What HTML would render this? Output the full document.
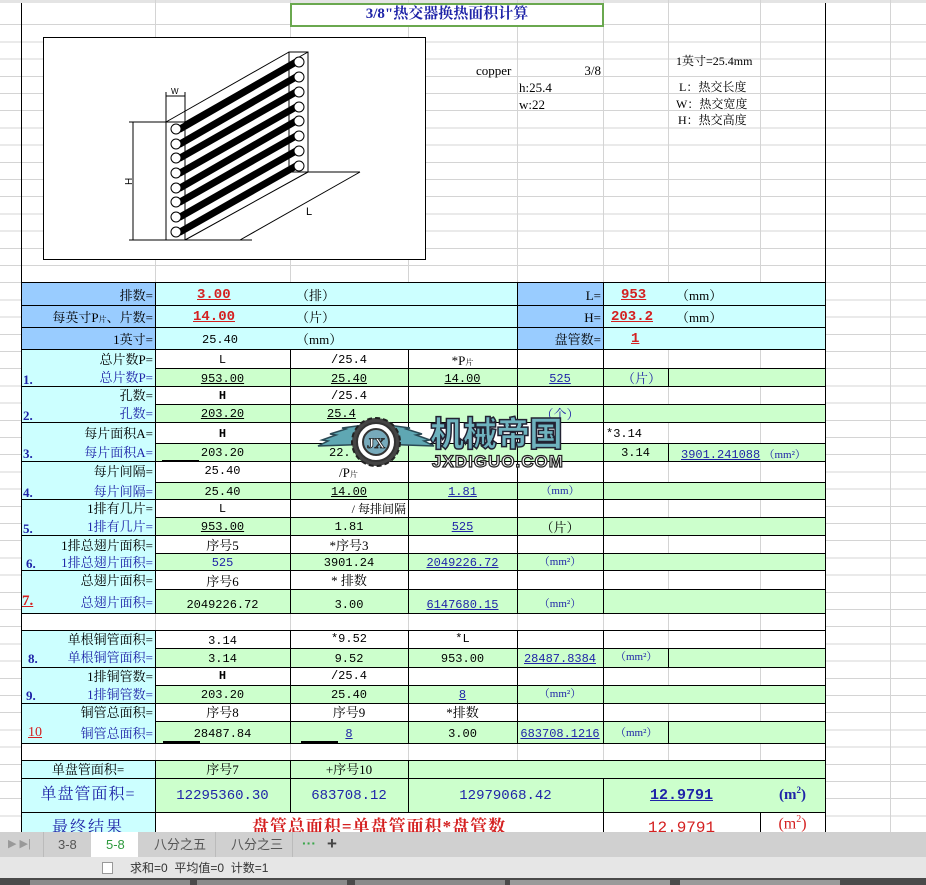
<!DOCTYPE html>
<html><head><meta charset="utf-8"><style>
*{margin:0;padding:0;box-sizing:border-box}
body{width:926px;height:885px;overflow:hidden;background:#fff;position:relative;font-family:"Liberation Serif","Noto Serif CJK SC",serif;font-size:13px;color:#000}
.g{position:absolute;background:#d4d4d4}
.c{position:absolute;border:1px solid #000}
.cy{background:#ccffff}.bl{background:#99ccff}.gr{background:#ccffcc}.wh{background:#fff}
.t{position:absolute;white-space:nowrap;line-height:1;font-family:"Liberation Serif","Noto Serif CJK SC",serif}
.r{text-align:right}.m{text-align:center}
.b{color:#1f24a8}.rd{color:#d42020}.u{text-decoration:underline}
.k{font-family:"Liberation Mono","Noto Sans CJK SC",monospace;font-size:12px}
</style></head><body>
<div style="position:absolute;left:0;top:0;width:926px;height:832px;background:repeating-linear-gradient(to bottom,transparent 0,transparent 16.2px,#d4d4d4 16.2px,#d4d4d4 17.2px);background-position:0 8px"></div>
<div class="g" style="left:0;top:0;width:926px;height:3px;background:#e4e4e4"></div>
<div class="g" style="left:155px;top:0;width:1px;height:282px"></div>
<div class="g" style="left:290px;top:0;width:1px;height:282px"></div>
<div class="g" style="left:408px;top:0;width:1px;height:282px"></div>
<div class="g" style="left:517px;top:0;width:1px;height:282px"></div>
<div class="g" style="left:603px;top:0;width:1px;height:282px"></div>
<div class="g" style="left:668px;top:0;width:1px;height:282px"></div>
<div class="g" style="left:760px;top:0;width:1px;height:282px"></div>
<div class="g" style="left:890px;top:0;width:1px;height:832px"></div>

<div style="position:absolute;left:290px;top:3px;width:314px;height:24px;border:2px solid #6aa84f;background:#fff"></div>
<div class="t m b" style="left:290px;top:7px;width:314px;font-weight:bold;font-size:15px">3/8"热交器换热面积计算</div>

<svg style="position:absolute;left:43px;top:37px" width="384" height="224" viewBox="0 0 384 224">
<rect x="0.5" y="0.5" width="382" height="222" fill="#fff" stroke="#000"/>
<g stroke="#000" fill="none" stroke-width="1">
<rect x="123" y="85" width="19" height="118"/>
<line x1="123" y1="85" x2="246" y2="15"/><line x1="142" y1="85" x2="265" y2="15"/>
<rect x="246" y="15" width="19" height="120"/>
<line x1="142" y1="203" x2="265" y2="135"/>
<line x1="142" y1="203" x2="209" y2="203"/>
<line x1="197" y1="203" x2="317" y2="135"/>
<line x1="265" y1="135" x2="317" y2="135"/>
<line x1="90" y1="85" x2="90" y2="203"/>
<line x1="86" y1="85" x2="123" y2="85"/><line x1="86" y1="203" x2="123" y2="203"/>
<line x1="123" y1="55" x2="123" y2="85"/><line x1="142" y1="55" x2="142" y2="85"/>
<line x1="123" y1="59" x2="142" y2="59"/>
</g>
<g stroke="#000" stroke-width="7" stroke-linecap="round">
<line x1="137" y1="92" x2="253" y2="25"/><line x1="137" y1="107" x2="253" y2="40"/>
<line x1="137" y1="121" x2="253" y2="55"/><line x1="137" y1="136" x2="253" y2="70"/>
<line x1="137" y1="151" x2="253" y2="84"/><line x1="137" y1="165" x2="253" y2="99"/>
<line x1="137" y1="180" x2="253" y2="114"/><line x1="137" y1="195" x2="253" y2="129"/>
</g>
<g stroke="#000" fill="#fff">
<circle cx="133" cy="92" r="5"/><circle cx="133" cy="107" r="5"/><circle cx="133" cy="121" r="5"/><circle cx="133" cy="136" r="5"/><circle cx="133" cy="151" r="5"/><circle cx="133" cy="165" r="5"/><circle cx="133" cy="180" r="5"/><circle cx="133" cy="195" r="5"/>
<circle cx="256" cy="25" r="5"/><circle cx="256" cy="40" r="5"/><circle cx="256" cy="55" r="5"/><circle cx="256" cy="70" r="5"/><circle cx="256" cy="84" r="5"/><circle cx="256" cy="99" r="5"/><circle cx="256" cy="114" r="5"/><circle cx="256" cy="129" r="5"/>
</g>
<text x="263" y="178" font-family="Liberation Sans" font-size="11">L</text>
<text x="128" y="57" font-family="Liberation Sans" font-size="8">W</text>
<text x="0" y="0" font-family="Liberation Sans" font-size="10" transform="translate(89,148) rotate(-90)">H</text>
</svg>

<div class="t" style="left:476px;top:64px">copper</div>
<div class="t r" style="left:540px;top:64px;width:61px">3/8</div>
<div class="t" style="left:519px;top:81px">h:25.4</div>
<div class="t" style="left:519px;top:98px">w:22</div>
<div class="t" style="left:676px;top:55px;font-size:12px">1英寸=25.4mm</div>
<div class="t" style="left:679px;top:81px;font-size:12px">L：热交长度</div>
<div class="t" style="left:676px;top:98px;font-size:12px">W：热交宽度</div>
<div class="t" style="left:678px;top:114px;font-size:12px">H：热交高度</div>

<div class="c bl" style="left:21px;top:282px;width:135px;height:24px"></div>
<div class="c bl" style="left:21px;top:305px;width:135px;height:23px"></div>
<div class="c bl" style="left:21px;top:327px;width:135px;height:23px"></div>
<div class="c cy" style="left:155px;top:282px;width:363px;height:24px"></div>
<div class="c cy" style="left:155px;top:305px;width:363px;height:23px"></div>
<div class="c cy" style="left:155px;top:327px;width:363px;height:23px"></div>
<div class="c bl" style="left:517px;top:282px;width:87px;height:24px"></div>
<div class="c bl" style="left:517px;top:305px;width:87px;height:23px"></div>
<div class="c bl" style="left:517px;top:327px;width:87px;height:23px"></div>
<div class="c cy" style="left:603px;top:282px;width:223px;height:24px"></div>
<div class="c cy" style="left:603px;top:305px;width:223px;height:23px"></div>
<div class="c cy" style="left:603px;top:327px;width:223px;height:23px"></div>

<div class="c cy" style="left:21px;top:349px;width:135px;height:38px"></div>
<div class="c cy" style="left:21px;top:386px;width:135px;height:37px"></div>
<div class="c cy" style="left:21px;top:422px;width:135px;height:40px"></div>
<div class="c cy" style="left:21px;top:461px;width:135px;height:39px"></div>
<div class="c cy" style="left:21px;top:499px;width:135px;height:37px"></div>
<div class="c cy" style="left:21px;top:535px;width:135px;height:36px"></div>
<div class="c cy" style="left:21px;top:570px;width:135px;height:44px"></div>
<div class="c wh" style="left:21px;top:613px;width:805px;height:18px"></div>
<div class="c cy" style="left:21px;top:630px;width:135px;height:38px"></div>
<div class="c cy" style="left:21px;top:667px;width:135px;height:37px"></div>
<div class="c cy" style="left:21px;top:703px;width:135px;height:41px"></div>
<div class="c wh" style="left:21px;top:743px;width:805px;height:18px"></div>

<div class="c wh" style="left:155px;top:349px;width:671px;height:20px"></div>
<div class="c wh" style="left:155px;top:386px;width:671px;height:19px"></div>
<div class="c wh" style="left:155px;top:422px;width:671px;height:22px"></div>
<div class="c wh" style="left:155px;top:461px;width:671px;height:22px"></div>
<div class="c wh" style="left:155px;top:499px;width:671px;height:19px"></div>
<div class="c wh" style="left:155px;top:535px;width:671px;height:19px"></div>
<div class="c wh" style="left:155px;top:570px;width:671px;height:20px"></div>
<div class="c wh" style="left:155px;top:630px;width:671px;height:19px"></div>
<div class="c wh" style="left:155px;top:667px;width:671px;height:19px"></div>
<div class="c wh" style="left:155px;top:703px;width:671px;height:19px"></div>
<div class="c gr" style="left:155px;top:368px;width:671px;height:19px"></div>
<div class="c gr" style="left:155px;top:404px;width:671px;height:19px"></div>
<div class="c gr" style="left:155px;top:443px;width:671px;height:19px"></div>
<div class="c gr" style="left:155px;top:482px;width:671px;height:18px"></div>
<div class="c gr" style="left:155px;top:517px;width:671px;height:19px"></div>
<div class="c gr" style="left:155px;top:553px;width:671px;height:18px"></div>
<div class="c gr" style="left:155px;top:589px;width:671px;height:25px"></div>
<div class="c gr" style="left:155px;top:648px;width:671px;height:20px"></div>
<div class="c gr" style="left:155px;top:685px;width:671px;height:19px"></div>
<div class="c gr" style="left:155px;top:721px;width:671px;height:23px"></div>

<div class="c cy" style="left:21px;top:760px;width:135px;height:19px"></div>
<div class="c gr" style="left:155px;top:760px;width:136px;height:19px"></div>
<div class="c gr" style="left:290px;top:760px;width:119px;height:19px"></div>
<div class="c gr" style="left:408px;top:760px;width:418px;height:19px"></div>
<div class="c cy" style="left:21px;top:778px;width:135px;height:35px"></div>
<div class="c gr" style="left:155px;top:778px;width:136px;height:35px"></div>
<div class="c gr" style="left:290px;top:778px;width:119px;height:35px"></div>
<div class="c gr" style="left:408px;top:778px;width:196px;height:35px"></div>
<div class="c gr" style="left:603px;top:778px;width:223px;height:35px"></div>
<div class="c cy" style="left:21px;top:812px;width:135px;height:30px"></div>
<div class="c wh" style="left:155px;top:812px;width:449px;height:30px"></div>
<div class="c wh" style="left:603px;top:812px;width:158px;height:30px"></div>
<div class="c wh" style="left:760px;top:812px;width:66px;height:30px"></div>

<div style="position:absolute;left:290px;top:349px;width:1px;height:264px;background:#000"></div>
<div style="position:absolute;left:408px;top:349px;width:1px;height:264px;background:#000"></div>
<div style="position:absolute;left:517px;top:349px;width:1px;height:264px;background:#000"></div>
<div style="position:absolute;left:603px;top:349px;width:1px;height:264px;background:#000"></div>
<div style="position:absolute;left:290px;top:630px;width:1px;height:113px;background:#000"></div>
<div style="position:absolute;left:408px;top:630px;width:1px;height:113px;background:#000"></div>
<div style="position:absolute;left:517px;top:630px;width:1px;height:113px;background:#000"></div>
<div style="position:absolute;left:603px;top:630px;width:1px;height:113px;background:#000"></div>
<div style="position:absolute;left:668px;top:368px;width:1px;height:18px;background:#000"></div>
<div style="position:absolute;left:668px;top:443px;width:1px;height:18px;background:#000"></div>
<div style="position:absolute;left:668px;top:648px;width:1px;height:19px;background:#000"></div>
<div style="position:absolute;left:668px;top:721px;width:1px;height:22px;background:#000"></div>
<div class="g" style="left:668px;top:350px;width:1px;height:18px"></div><div class="g" style="left:760px;top:350px;width:1px;height:18px"></div>
<div class="g" style="left:668px;top:387px;width:1px;height:17px"></div><div class="g" style="left:760px;top:387px;width:1px;height:17px"></div>
<div class="g" style="left:668px;top:423px;width:1px;height:20px"></div><div class="g" style="left:760px;top:423px;width:1px;height:20px"></div>
<div class="g" style="left:668px;top:462px;width:1px;height:20px"></div><div class="g" style="left:760px;top:462px;width:1px;height:20px"></div>
<div class="g" style="left:668px;top:500px;width:1px;height:17px"></div><div class="g" style="left:760px;top:500px;width:1px;height:17px"></div>
<div class="g" style="left:668px;top:536px;width:1px;height:17px"></div><div class="g" style="left:760px;top:536px;width:1px;height:17px"></div>
<div class="g" style="left:668px;top:571px;width:1px;height:18px"></div><div class="g" style="left:760px;top:571px;width:1px;height:18px"></div>
<div class="g" style="left:155px;top:614px;width:1px;height:16px"></div><div class="g" style="left:290px;top:614px;width:1px;height:16px"></div><div class="g" style="left:408px;top:614px;width:1px;height:16px"></div><div class="g" style="left:517px;top:614px;width:1px;height:16px"></div><div class="g" style="left:603px;top:614px;width:1px;height:16px"></div><div class="g" style="left:668px;top:614px;width:1px;height:16px"></div><div class="g" style="left:760px;top:614px;width:1px;height:16px"></div>
<div class="g" style="left:668px;top:631px;width:1px;height:17px"></div><div class="g" style="left:760px;top:631px;width:1px;height:17px"></div>
<div class="g" style="left:668px;top:668px;width:1px;height:17px"></div><div class="g" style="left:760px;top:668px;width:1px;height:17px"></div>
<div class="g" style="left:668px;top:704px;width:1px;height:17px"></div><div class="g" style="left:760px;top:704px;width:1px;height:17px"></div>
<div class="g" style="left:155px;top:744px;width:1px;height:16px"></div><div class="g" style="left:290px;top:744px;width:1px;height:16px"></div><div class="g" style="left:408px;top:744px;width:1px;height:16px"></div><div class="g" style="left:517px;top:744px;width:1px;height:16px"></div><div class="g" style="left:603px;top:744px;width:1px;height:16px"></div><div class="g" style="left:668px;top:744px;width:1px;height:16px"></div><div class="g" style="left:760px;top:744px;width:1px;height:16px"></div>

<div style="position:absolute;left:21px;top:3px;width:1px;height:829px;background:#000"></div>
<div style="position:absolute;left:825px;top:3px;width:1px;height:829px;background:#000"></div>

<div class="t r" style="left:21px;top:289px;width:132px">排数=</div>
<div class="t r" style="left:21px;top:311px;width:132px">每英寸P<span style="font-size:8px">片</span>、片数=</div>
<div class="t r" style="left:21px;top:333px;width:132px">1英寸=</div>
<div class="t rd u k" style="left:197px;top:288px;font-size:14px;font-weight:bold">3.00 </div>
<div class="t rd u k" style="left:193px;top:310px;font-size:14px;font-weight:bold">14.00 </div>
<div class="t k" style="left:202px;top:334px">25.40</div>
<div class="t" style="left:296px;top:289px">（排）</div>
<div class="t" style="left:296px;top:311px">（片）</div>
<div class="t" style="left:296px;top:333px">（mm）</div>
<div class="t r" style="left:517px;top:289px;width:84px">L=</div>
<div class="t r" style="left:517px;top:311px;width:84px">H=</div>
<div class="t r" style="left:517px;top:333px;width:84px">盘管数=</div>
<div class="t rd u k" style="left:621px;top:288px;font-size:14px;font-weight:bold">953</div>
<div class="t rd u k" style="left:611px;top:310px;font-size:14px;font-weight:bold">203.2</div>
<div class="t rd u k" style="left:631px;top:332px;font-size:14px;font-weight:bold">1</div>
<div class="t" style="left:676px;top:289px">（mm）</div>
<div class="t" style="left:676px;top:311px">（mm）</div>

<div class="t r" style="left:21px;top:353px;width:132px">总片数P=</div>
<div class="t r b" style="left:21px;top:371px;width:132px">总片数P=</div>
<div class="t b" style="left:23px;top:373px;font-weight:bold">1.</div>
<div class="t r" style="left:21px;top:389px;width:132px">孔数=</div>
<div class="t r b" style="left:21px;top:407px;width:132px">孔数=</div>
<div class="t b" style="left:23px;top:409px;font-weight:bold">2.</div>
<div class="t r" style="left:21px;top:427px;width:132px">每片面积A=</div>
<div class="t r b" style="left:21px;top:446px;width:132px">每片面积A=</div>
<div class="t b" style="left:23px;top:447px;font-weight:bold">3.</div>
<div class="t r" style="left:21px;top:465px;width:132px">每片间隔=</div>
<div class="t r b" style="left:21px;top:485px;width:132px">每片间隔=</div>
<div class="t b" style="left:23px;top:486px;font-weight:bold">4.</div>
<div class="t r" style="left:21px;top:502px;width:132px">1排有几片=</div>
<div class="t r b" style="left:21px;top:520px;width:132px">1排有几片=</div>
<div class="t b" style="left:23px;top:522px;font-weight:bold">5.</div>
<div class="t r" style="left:21px;top:539px;width:132px">1排总翅片面积=</div>
<div class="t r b" style="left:21px;top:556px;width:132px">1排总翅片面积=</div>
<div class="t b" style="left:26px;top:557px;font-weight:bold">6.</div>
<div class="t r" style="left:21px;top:574px;width:132px">总翅片面积=</div>
<div class="t r b" style="left:21px;top:596px;width:132px">总翅片面积=</div>
<div class="t rd u" style="left:22px;top:594px;font-weight:bold;font-size:15px">7.</div>
<div class="t r" style="left:21px;top:633px;width:132px">单根铜管面积=</div>
<div class="t r b" style="left:21px;top:651px;width:132px">单根铜管面积=</div>
<div class="t b" style="left:28px;top:652px;font-weight:bold">8.</div>
<div class="t r" style="left:21px;top:670px;width:132px">1排铜管数=</div>
<div class="t r b" style="left:21px;top:688px;width:132px">1排铜管数=</div>
<div class="t b" style="left:26px;top:689px;font-weight:bold">9.</div>
<div class="t r" style="left:21px;top:706px;width:132px">铜管总面积=</div>
<div class="t r b" style="left:21px;top:727px;width:132px">铜管总面积=</div>
<div class="t rd u" style="left:28px;top:726px;font-size:14px">10</div>

<div class="t m k" style="left:155px;top:354px;width:135px">L</div>
<div class="t m k" style="left:290px;top:354px;width:118px">/25.4</div>
<div class="t m" style="left:408px;top:354px;width:109px">*P<span style="font-size:8px">片</span></div>
<div class="t m k u" style="left:155px;top:373px;width:135px">953.00</div>
<div class="t m k u" style="left:290px;top:373px;width:118px">25.40</div>
<div class="t m k u" style="left:408px;top:373px;width:109px">14.00 </div>
<div class="t m k u b" style="left:517px;top:373px;width:86px">525</div>
<div class="t b" style="left:622px;top:372px">（片）</div>

<div class="t m k" style="left:155px;top:390px;width:135px;font-weight:bold">H</div>
<div class="t m k" style="left:290px;top:390px;width:118px">/25.4</div>
<div class="t m k u" style="left:155px;top:408px;width:135px">203.20</div>
<div class="t k u" style="left:327px;top:408px">25.4</div>
<div class="t m b" style="left:517px;top:408px;width:86px">（个）</div>

<div class="t m k" style="left:155px;top:428px;width:135px;font-weight:bold">H</div>
<div class="t k" style="left:606px;top:428px">*3.14</div>
<div class="t m k" style="left:155px;top:447px;width:135px">203.20</div>
<div style="position:absolute;left:162px;top:460px;width:37px;height:2px;background:#000"></div>
<div class="t k" style="left:329px;top:447px">22.</div>
<div class="t m k" style="left:603px;top:447px;width:65px">3.14</div>
<div class="t b" style="left:681px;top:447px"><span class="u k">3901.241088</span> <span style="font-size:11px">（mm²）</span></div>

<div class="t m k" style="left:155px;top:465px;width:135px">25.40</div>
<div class="t" style="left:339px;top:466px">/P<span style="font-size:8px">片</span></div>
<div class="t m k" style="left:155px;top:486px;width:135px">25.40</div>
<div class="t m k u" style="left:290px;top:486px;width:118px">14.00</div>
<div class="t m k u b" style="left:408px;top:486px;width:109px">1.81 </div>
<div class="t m b" style="left:517px;top:486px;width:86px;font-size:11px">（mm）</div>

<div class="t m k" style="left:155px;top:503px;width:135px">L</div>
<div class="t r" style="left:290px;top:503px;width:116px;font-size:12px">/ 每排间隔</div>
<div class="t m k u" style="left:155px;top:521px;width:135px">953.00</div>
<div class="t m k" style="left:290px;top:521px;width:118px">1.81</div>
<div class="t m k u b" style="left:408px;top:521px;width:109px">525</div>
<div class="t m" style="left:517px;top:521px;width:86px">（片）</div>

<div class="t m" style="left:155px;top:539px;width:135px">序号5</div>
<div class="t m" style="left:290px;top:539px;width:118px">*序号3</div>
<div class="t m k b" style="left:155px;top:557px;width:135px">525</div>
<div class="t m k" style="left:290px;top:557px;width:118px">3901.24</div>
<div class="t m k u b" style="left:408px;top:557px;width:109px">2049226.72 </div>
<div class="t m b" style="left:517px;top:557px;width:86px;font-size:11px">（mm²）</div>

<div class="t m" style="left:155px;top:575px;width:135px">序号6</div>
<div class="t m" style="left:290px;top:574px;width:118px">* 排数</div>
<div class="t m k" style="left:155px;top:599px;width:135px">2049226.72</div>
<div class="t m k" style="left:290px;top:599px;width:118px">3.00</div>
<div class="t m k u b" style="left:408px;top:599px;width:109px">6147680.15 </div>
<div class="t m b" style="left:517px;top:599px;width:86px;font-size:11px">（mm²）</div>

<div class="t m k" style="left:155px;top:635px;width:135px">3.14</div>
<div class="t m k" style="left:290px;top:633px;width:118px">*9.52</div>
<div class="t m k" style="left:408px;top:633px;width:109px">*L</div>
<div class="t m k" style="left:155px;top:653px;width:135px">3.14</div>
<div class="t m k" style="left:290px;top:653px;width:118px">9.52</div>
<div class="t m k" style="left:408px;top:653px;width:109px">953.00</div>
<div class="t m k u b" style="left:517px;top:653px;width:86px">28487.8384</div>
<div class="t b" style="left:615px;top:652px;font-size:11px">（mm²）</div>

<div class="t m k" style="left:155px;top:670px;width:135px;font-weight:bold">H</div>
<div class="t m k" style="left:290px;top:670px;width:118px">/25.4</div>
<div class="t m k" style="left:155px;top:689px;width:135px">203.20</div>
<div class="t m k" style="left:290px;top:689px;width:118px">25.40</div>
<div class="t m k u b" style="left:408px;top:689px;width:109px">8</div>
<div class="t m b" style="left:517px;top:689px;width:86px;font-size:11px">（mm²）</div>

<div class="t m" style="left:155px;top:706px;width:135px">序号8</div>
<div class="t m" style="left:290px;top:706px;width:118px">序号9</div>
<div class="t m" style="left:408px;top:706px;width:109px">*排数</div>
<div class="t m k" style="left:155px;top:728px;width:135px">28487.84</div>
<div style="position:absolute;left:163px;top:741px;width:37px;height:2px;background:#000"></div>
<div class="t m k u b" style="left:290px;top:728px;width:118px">8</div>
<div style="position:absolute;left:301px;top:741px;width:37px;height:2px;background:#000"></div>
<div class="t m k" style="left:408px;top:728px;width:109px">3.00</div>
<div class="t m k u b" style="left:517px;top:728px;width:86px">683708.1216</div>
<div class="t b" style="left:615px;top:728px;font-size:11px">（mm²）</div>

<div class="t m" style="left:21px;top:763px;width:134px">单盘管面积=</div>
<div class="t m" style="left:155px;top:763px;width:135px">序号7</div>
<div class="t m" style="left:290px;top:763px;width:118px">+序号10</div>
<div class="t m b" style="left:21px;top:787px;width:134px;font-size:16px;letter-spacing:1px">单盘管面积=</div>
<div class="t m b k" style="left:155px;top:789px;width:135px;font-size:14px">12295360.30</div>
<div class="t m b k" style="left:290px;top:789px;width:118px;font-size:14px">683708.12</div>
<div class="t m b k" style="left:408px;top:789px;width:195px;font-size:14px">12979068.42</div>
<div class="t m b u k" style="left:603px;top:788px;width:157px;font-size:15px;font-weight:bold">12.9791</div>
<div class="t m b" style="left:760px;top:786px;width:65px;font-size:15px;font-weight:bold">(m<sup style="font-size:9px">2</sup>)</div>
<div class="t m b" style="left:21px;top:820px;width:134px;font-size:16px;letter-spacing:2px">最终结果</div>
<div class="t m rd" style="left:155px;top:818px;width:448px;font-size:17px;font-weight:bold;letter-spacing:1px">盘管总面积=单盘管面积*盘管数</div>
<div class="t m rd k" style="left:603px;top:820px;width:157px;font-size:16px">12.9791</div>
<div class="t m rd" style="left:760px;top:815px;width:65px;font-size:16px">(m<sup style="font-size:10px">2</sup>)</div>

<svg style="position:absolute;left:316px;top:412px" width="120" height="62" viewBox="0 0 120 62">
<path d="M60 32 L2 34 L12 29 L6 28 L20 23 L14 22 L30 17 L26 16 L48 13 Z" fill="#5fa7b3" stroke="#2a4a55" stroke-width="1.5"/>
<path d="M60 32 L118 34 L108 29 L114 28 L100 23 L106 22 L90 17 L94 16 L72 13 Z" fill="#5fa7b3" stroke="#2a4a55" stroke-width="1.5"/>
<circle cx="60" cy="30" r="24" fill="#444" stroke="#222" stroke-width="2" stroke-dasharray="5 3"/>
<circle cx="60" cy="30" r="19" fill="#fff" stroke="#333" stroke-width="2"/>
<circle cx="60" cy="30" r="13" fill="#7ab" stroke="#333" stroke-width="2"/>
<text x="60" y="36" text-anchor="middle" font-family="Liberation Serif" font-weight="bold" font-size="15" fill="#fff" stroke="#222" stroke-width="0.8">JX</text>
</svg>
<div class="t" style="left:430px;top:413px;font-family:'Noto Sans CJK SC',sans-serif;font-weight:900;font-size:34px;color:#6eb2be;-webkit-text-stroke:1.5px #223;letter-spacing:-1px;line-height:38px">机械帝国</div>
<div class="t" style="left:432px;top:453px;font-family:'Liberation Sans',sans-serif;font-weight:bold;font-size:17px;color:#fff;-webkit-text-stroke:1.2px #222;letter-spacing:1px">JXDIGUO.COM</div>

<div style="position:absolute;left:0;top:832px;width:926px;height:25px;background:#d0d0d0"></div>
<div class="t" style="left:8px;top:839px;color:#999;font-size:11px;font-family:'Liberation Sans',sans-serif">▶ ▶|</div>
<div style="position:absolute;left:43px;top:832px;width:1px;height:25px;background:#bbb"></div>
<div class="t" style="left:58px;top:838px;color:#555;font-family:'Liberation Sans',sans-serif;font-size:13px">3-8</div>
<div style="position:absolute;left:91px;top:832px;width:47px;height:25px;background:#fff"></div>
<div class="t" style="left:106px;top:838px;color:#2e9a3e;font-family:'Liberation Sans',sans-serif;font-size:13px">5-8</div>
<div class="t" style="left:154px;top:838px;color:#555;font-family:'Liberation Sans','Noto Sans CJK SC',sans-serif;font-size:13px">八分之五</div>
<div style="position:absolute;left:215px;top:832px;width:1px;height:25px;background:#bbb"></div>
<div class="t" style="left:231px;top:838px;color:#555;font-family:'Liberation Sans','Noto Sans CJK SC',sans-serif;font-size:13px">八分之三</div>
<div style="position:absolute;left:292px;top:832px;width:1px;height:25px;background:#bbb"></div>
<div class="t" style="left:302px;top:836px;color:#3aa64a;font-weight:bold;font-size:14px;font-family:'Liberation Sans',sans-serif">···</div>
<div class="t" style="left:327px;top:835px;color:#444;font-weight:bold;font-size:17px;font-family:'Liberation Sans',sans-serif">+</div>
<div style="position:absolute;left:0;top:857px;width:926px;height:21px;background:#e6e6e6"></div>
<div style="position:absolute;left:102px;top:862px;width:11px;height:12px;border:1px solid #999;background:#fff"></div>
<div class="t" style="left:130px;top:862px;color:#333;font-size:12px;font-family:'Liberation Sans','Noto Sans CJK SC',sans-serif">求和=0&nbsp; 平均值=0&nbsp; 计数=1</div>
<div style="position:absolute;left:0;top:878px;width:926px;height:7px;background:#4a4a4a"></div>
<div style="position:absolute;left:30px;top:880px;width:160px;height:5px;background:#8a8a8a"></div>
<div style="position:absolute;left:197px;top:880px;width:150px;height:5px;background:#8a8a8a"></div>
<div style="position:absolute;left:355px;top:880px;width:150px;height:5px;background:#8a8a8a"></div>
<div style="position:absolute;left:510px;top:880px;width:160px;height:5px;background:#9a9a9a"></div>
<div style="position:absolute;left:680px;top:880px;width:160px;height:5px;background:#9a9a9a"></div>
</body></html>
